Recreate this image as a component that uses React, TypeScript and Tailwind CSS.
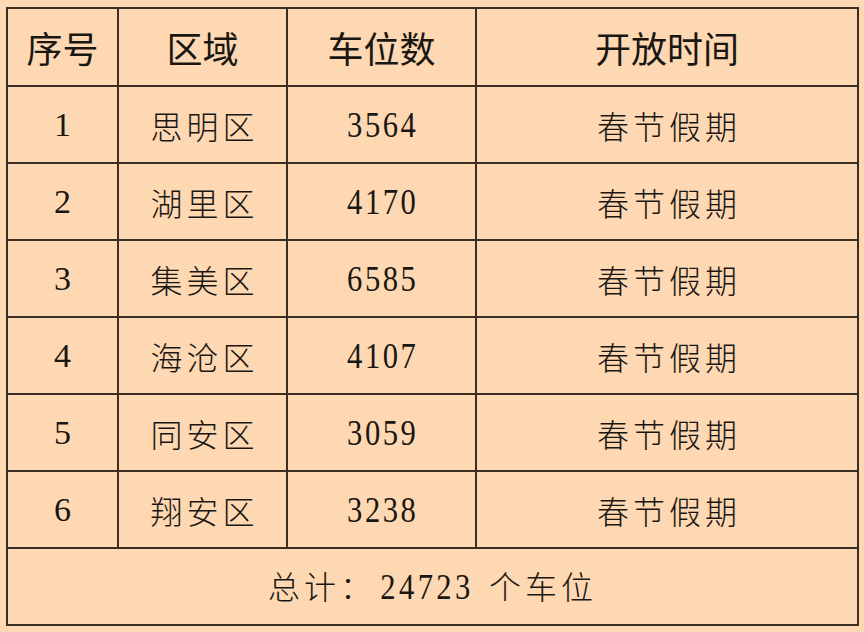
import React from "react";

const rows = [
  { id: "1", area: "思明区", count: "3564" },
  { id: "2", area: "湖里区", count: "4170" },
  { id: "3", area: "集美区", count: "6585" },
  { id: "4", area: "海沧区", count: "4107" },
  { id: "5", area: "同安区", count: "3059" },
  { id: "6", area: "翔安区", count: "3238" },
];

const serif = "font-['Liberation_Serif','Noto_Sans_CJK_SC',serif]";
const cjk = "font-['Noto_Sans_CJK_SC',sans-serif]";

export default function App() {
  return (
    <div className="w-[864px] h-[632px] bg-[#fdd8b2] pt-[7px] pl-[6px]">
      <table className="border-collapse w-[853px] text-[#1a1612]">
        <thead>
          <tr className="h-[78px]">
            {["序号", "区域", "车位数", "开放时间"].map((h, i) => (
              <th
                key={h}
                className={`border-2 border-[#3b2d22] text-[36px] font-normal ${cjk} ${
                  ["w-[111px]", "w-[169px]", "w-[189px]", ""][i]
                }`}
              >
                {h}
              </th>
            ))}
          </tr>
        </thead>
        <tbody>
          {rows.map((r) => (
            <tr key={r.id} className="h-[77px]">
              <td className={`border-2 border-[#3b2d22] text-center text-[34px] ${serif}`}>
                {r.id}
              </td>
              <td className={`border-2 border-[#3b2d22] text-center text-[32px] font-light tracking-[4px] pl-[4px] ${cjk}`}>
                {r.area}
              </td>
              <td className={`border-2 border-[#3b2d22] text-center ${serif}`}>
                <span className="inline-block text-[36px] tracking-[3px] pl-[3px] scale-x-[0.85]">{r.count}</span>
              </td>
              <td className={`border-2 border-[#3b2d22] text-center text-[32px] font-light tracking-[4px] pl-[4px] ${cjk}`}>
                春节假期
              </td>
            </tr>
          ))}
          <tr className="h-[77px]">
            <td
              colSpan={4}
              className={`border-2 border-[#3b2d22] text-center text-[32px] font-light tracking-[4px] ${cjk}`}
            >
              总计：
              <span className={`${serif} font-normal inline-block text-[36px] tracking-[4px] scale-x-[0.85] mx-[-4px]`}>24723</span>
              {" "}个车位
            </td>
          </tr>
        </tbody>
      </table>
    </div>
  );
}
